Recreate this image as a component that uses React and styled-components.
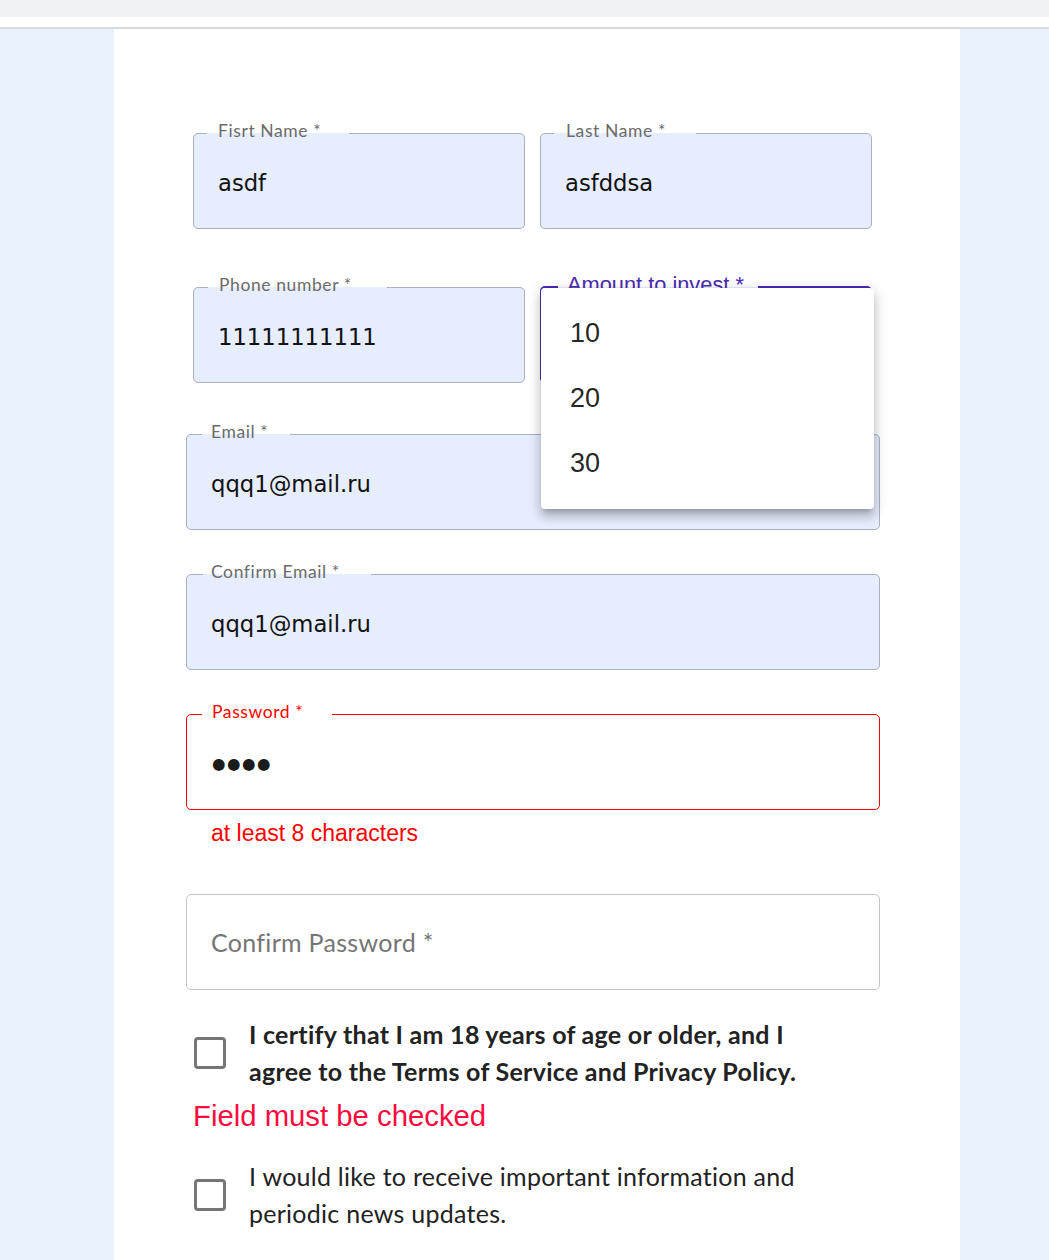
import React from "react";
import styled, { createGlobalStyle } from "styled-components";

const Global = createGlobalStyle`
  html, body { margin: 0; padding: 0; }
  body { background: #e9f3fe; font-family: "Lato", "Liberation Sans", sans-serif; }
  * { box-sizing: border-box; }
`;

const TopStrip = styled.div`
  height: 17px;
  background: #f1f2f4;
`;

const WhiteStrip = styled.div`
  height: 12px;
  background: #fff;
  border-bottom: 2px solid #d9dadf;
`;

const Page = styled.div`
  display: flex;
  background: #e9f3fe;
  min-height: 1231px;
`;

const Sheet = styled.main`
  margin-left: 114px;
  width: 846px;
  background: #fff;
  padding: 104px 80px 60px 72px;
  display: flex;
  flex-direction: column;
`;

const Row = styled.div`
  display: grid;
  grid-template-columns: 332px 332px;
  column-gap: 15px;
  padding-left: 7px;
  margin-top: ${(p) => p.$mt || 0}px;
`;

const Box = styled.div`
  position: relative;
  height: 96px;
  margin-top: ${(p) => p.$mt || 0}px;
  border-radius: 5px;
  background: ${(p) => (p.$filled ? "#e6edfd" : "#fff")};
  display: flex;
  align-items: center;
  padding: ${(p) => (p.$placeholder ? "0" : "3px")} 25px 0;
`;

const Outline = styled.fieldset`
  position: absolute;
  top: ${(p) => (p.$hasLabel ? "-9px" : "0")};
  left: 0;
  right: 0;
  bottom: 0;
  margin: 0;
  padding: 0 0 0 ${(p) => p.$pl}px;
  min-width: 0;
  border: ${(p) => p.$bw}px solid ${(p) => p.$color};
  border-radius: 5px;
  pointer-events: none;
`;

const Legend = styled.legend`
  height: 18px;
  line-height: 18px;
  padding: 0 ${(p) => p.$pr}px 0 ${(p) => p.$lpad}px;
  font-family: ${(p) =>
    p.$alt ? '"Liberation Sans", Arial, sans-serif' : '"Lato", sans-serif'};
  font-size: ${(p) => (p.$alt ? 21.8 : 17.5)}px;
  letter-spacing: ${(p) => (p.$alt ? 0 : 0.6)}px;
  color: ${(p) => p.$color};
  white-space: nowrap;
`;

const LegendText = styled.span`
  position: relative;
  top: ${(p) => p.$shift}px;
`;

const Value = styled.div`
  font-family: "DejaVu Sans", Verdana, sans-serif;
  font-size: 22.7px;
  color: #111;
  white-space: nowrap;
`;

const Dots = styled.div`
  font-family: "DejaVu Sans", sans-serif;
  font-size: 15.5px;
  letter-spacing: 1.5px;
  color: #1b1b1b;
  margin-left: 1px;
`;

const Placeholder = styled.div`
  font-family: "Lato", sans-serif;
  font-size: 25px;
  letter-spacing: 0.3px;
  color: #757575;
`;

const Menu = styled.ul`
  position: absolute;
  top: 1px;
  left: 1px;
  width: 333px;
  margin: 0;
  padding: 13px 0;
  list-style: none;
  background: #fff;
  border-radius: 4px;
  z-index: 3;
  box-shadow: 0px 5px 5px -3px rgba(0, 0, 0, 0.2),
    0px 8px 10px 1px rgba(0, 0, 0, 0.14), 0px 3px 14px 2px rgba(0, 0, 0, 0.12);
`;

const MenuItem = styled.li`
  height: 65px;
  display: flex;
  align-items: center;
  padding: 0 29px;
  font-family: "Liberation Sans", Arial, sans-serif;
  font-size: 27px;
  color: rgba(0, 0, 0, 0.87);
`;

const HelperText = styled.div`
  margin-top: ${(p) => p.$mt}px;
  margin-left: ${(p) => p.$ml}px;
  font-family: "Liberation Sans", Arial, sans-serif;
  font-size: ${(p) => p.$size}px;
  line-height: ${(p) => p.$lh}px;
  color: ${(p) => p.$color};
`;

const CheckRow = styled.label`
  display: flex;
  align-items: center;
  gap: 23px;
  padding-left: 8px;
  margin-top: ${(p) => p.$mt}px;
`;

const CheckBoxIcon = styled.span`
  flex: none;
  width: 32px;
  height: 32px;
  border: 3px solid #767676;
  border-radius: 4px;
`;

const CheckText = styled.span`
  max-width: 570px;
  font-family: "Lato", sans-serif;
  font-size: 25px;
  line-height: 37px;
  letter-spacing: ${(p) => (p.$bold ? 0.27 : 0.26)}px;
  font-weight: ${(p) => (p.$bold ? 700 : 400)};
  color: #222;
`;

const GREY = "#aab0c2";
const LABEL = "#6b6b6b";

function Field({ label, pr, children, filled = true, color = GREY, labelColor = LABEL, bw = 1, alt, mt, pl = 14, lpad = 10, placeholder, extra }) {
  return (
    <Box $filled={filled} $mt={mt} $placeholder={placeholder}>
      <Outline $hasLabel={!!label} $pl={pl} $bw={bw} $color={color}>
        {label && (
          <Legend $pr={pr} $lpad={lpad} $color={labelColor} $alt={alt}>
            <LegendText $shift={-2}>{label}</LegendText>
          </Legend>
        )}
      </Outline>
      {children}
      {extra}
    </Box>
  );
}

export default function App() {
  return (
    <>
      <Global />
      <TopStrip />
      <WhiteStrip />
      <Page>
        <Sheet>
          <Row>
            <Field label="Fisrt Name *" pr={28} pl={13} lpad={11}>
              <Value>asdf</Value>
            </Field>
            <Field label="Last Name *" pr={30} pl={13} lpad={12}>
              <Value>asfddsa</Value>
            </Field>
          </Row>
          <Row $mt={58}>
            <Field label="Phone number *" pr={35} pl={14} lpad={11}>
              <Value>11111111111</Value>
            </Field>
            <Field
              label="Amount to invest *"
              pr={14}
              pl={16}
              lpad={9}
              bw={2}
              color="#4a2bb0"
              labelColor="#4a2bb0"
              alt
              extra={
                <Menu>
                  <MenuItem>10</MenuItem>
                  <MenuItem>20</MenuItem>
                  <MenuItem>30</MenuItem>
                </Menu>
              }
            >
              <Value />
            </Field>
          </Row>
          <Field label="Email *" pr={22} pl={15} lpad={9} mt={51}>
            <Value>qqq1@mail.ru</Value>
          </Field>
          <Field label="Confirm Email *" pr={31} pl={16} lpad={8} mt={44}>
            <Value>qqq1@mail.ru</Value>
          </Field>
          <Field
            label="Password *"
            pr={29}
            pl={15}
            lpad={10}
            mt={44}
            filled={false}
            color="#ff0000"
            labelColor="#ff0000"
          >
            <Dots>●●●●</Dots>
          </Field>
          <HelperText $mt={9} $ml={25} $size={23} $lh={28} $color="#ff0000">
            at least 8 characters
          </HelperText>
          <Field mt={47} filled={false} color="#c4c4c4" placeholder>
            <Placeholder>Confirm Password *</Placeholder>
          </Field>
          <CheckRow $mt={26}>
            <CheckBoxIcon />
            <CheckText $bold>
              I certify that I am 18 years of age or older, and I agree to the Terms of Service and Privacy Policy.
            </CheckText>
          </CheckRow>
          <HelperText $mt={9} $ml={7} $size={29.3} $lh={34} $color="#ff0a3e">
            Field must be checked
          </HelperText>
          <CheckRow $mt={25}>
            <CheckBoxIcon />
            <CheckText>
              I would like to receive important information and periodic news updates.
            </CheckText>
          </CheckRow>
        </Sheet>
      </Page>
    </>
  );
}
